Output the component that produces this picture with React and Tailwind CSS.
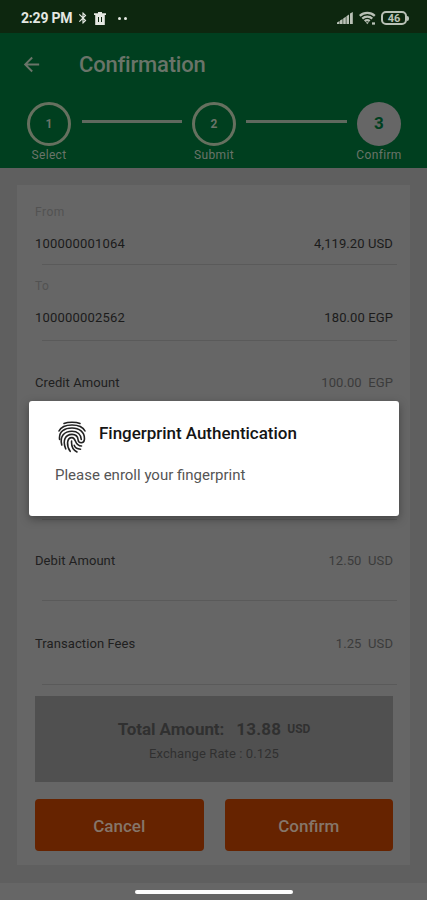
import { MdArrowBack, MdBluetooth } from "react-icons/md";

const steps = [
  { number: "1", label: "Select" },
  { number: "2", label: "Submit" },
  { number: "3", label: "Confirm", current: true },
];

const accounts = [
  { title: "From", account: "100000001064", balance: "4,119.20 USD" },
  { title: "To", account: "100000002562", balance: "180.00 EGP" },
];

function StatusBar() {
  return (
    <div className="flex h-[33px] items-center bg-[#0d270f] pt-[3px] pr-[18px] pl-[21px] text-[#e4e8e2]">
      <span className="w-[53px] whitespace-nowrap text-[14px] font-bold tracking-[-0.2px]">
        2:29 PM
      </span>
      <MdBluetooth className="ml-[2px] size-[14px]" />
      <svg className="ml-[4px] h-[13px] w-3" viewBox="0 0 12 13" fill="currentColor">
        <path d="M4 0h4v1.2h4V3H0V1.2h4z" />
        <path fillRule="evenodd" d="M1.2 3h9.6v10H1.2zM4 5v5h1V5zm3 0v5h1V5z" />
      </svg>
      <span className="ml-3 flex gap-[3px]">
        <span className="size-[3px] rounded-full bg-current" />
        <span className="size-[3px] rounded-full bg-current" />
      </span>

      <div className="ml-auto flex items-center text-[#b9c1b6]">
        <svg className="h-3 w-4" viewBox="0 0 16 12" fill="currentColor">
          <path d="M0 10.5 2.6 9v3H0zM3 8.6l2.6-1.6v5H3zM6.2 6.4l2.6-1.6V12H6.2zM9.4 4.2 12 2.4V12H9.4zM13 1.6 15.8 0v12H13z" />
        </svg>
        <svg className="ml-[6px] h-[14px] w-[17px]" viewBox="0 0 17 14" fill="none" stroke="currentColor" strokeWidth="2.3">
          <path d="M.8 4.8a11 11 0 0 1 15 0M3.3 7.6a7.4 7.4 0 0 1 10 0M5.7 10.2a3.8 3.8 0 0 1 5 0" />
          <path d="m8.3 13.2-1.6-2h3.2z" fill="currentColor" stroke="none" />
          <path d="M13 12.5h3" />
        </svg>
        <div className="ml-[5px] flex h-[14px] w-[26px] items-center justify-center rounded-[5px] border-2 border-current">
          <span className="text-[11px] leading-none font-bold">46</span>
        </div>
        <span className="h-[5px] w-[2px] rounded-r-sm bg-current" />
      </div>
    </div>
  );
}

function Header() {
  return (
    <header className="h-[135px] bg-[#003f1f] text-[#6a7469]">
      <div className="flex h-[62px] items-center pl-[20px]">
        <MdArrowBack className="size-[23px]" />
        <h1 className="ml-9 text-[22px] font-medium tracking-[-0.2px]">Confirmation</h1>
      </div>

      <div className="relative flex justify-between pt-[7px] pr-[26px] pl-[27px]">
        {steps.map(({ number, label, current }) => (
          <div key={number} className="flex w-11 flex-col items-center">
            <span
              className={`flex size-11 items-center justify-center rounded-full font-bold ${
                current
                  ? "bg-[#666666] text-[17px] text-[#003f1f]"
                  : "border-[3px] border-[#66705f] text-[12px]"
              }`}
            >
              {number}
            </span>
            <span className="mt-[2px] text-[12px] leading-[15px] tracking-[0.35px]">{label}</span>
          </div>
        ))}
        <span className="absolute top-[25px] left-[82px] h-[3px] w-[100px] bg-[#5f695e]" />
        <span className="absolute top-[25px] left-[246px] h-[3px] w-[101px] bg-[#5f695e]" />
      </div>
    </header>
  );
}

function AmountRow({ label, value, className }) {
  return (
    <div className={`flex items-center justify-between pt-[2px] ${className}`}>
      <span className="tracking-[0.08px] text-[#202020]">{label}</span>
      <span className="tracking-[0.08px] whitespace-pre text-[#3b3b3b]">{value}</span>
    </div>
  );
}

function Divider() {
  return <div className="-mr-1 ml-[7px] h-px bg-[#5a5a5a]" />;
}

function FingerprintIcon() {
  return (
    <svg
      className="ml-[3px] h-8 w-7 shrink-0"
      viewBox="0 0 28 32"
      fill="none"
      stroke="#222222"
      strokeWidth="1.6"
      strokeLinecap="round"
    >
      <path d="M6 2.5C10 .8 18 .8 22 2.5" />
      <path d="M1 10C5 2 23 2 27 10" />
      <path d="M1.6 18.5C.5 10 7 7 14 7s13 4 12.4 11.5c-.3 4.3-6 4.3-6.3.2C19.8 15.500 17.600 13.400 14 13.400c-6.500 0-9.800 6-6.300 14.400" />
      <path d="M3.800 24C1.300 15 6.500 10.200 14 10.200c5.500 0 9 3.300 9.300 8.300" />
      <path d="M12.200 30.300C8.500 25.500 8.300 16.600 14 16.600c4.600 0 2 8.400 9.500 8.400" />
      <path d="M19 31C14.300 28.800 13.200 25 13.600 20" />
      <path d="M22.500 28.300C18.700 28 16.900 26.400 16.200 24.300" />
    </svg>
  );
}

function FingerprintDialog() {
  return (
    <div
      role="dialog"
      aria-label="Fingerprint Authentication"
      className="absolute top-[401px] left-[29px] h-[115px] w-[370px] rounded-[3px] bg-white px-[26px] pt-[20px] shadow-[0_3px_10px_rgba(0,0,0,0.35)]"
    >
      <div className="flex h-[35px] items-start">
        <FingerprintIcon />
        <h2 className="ml-[13px] text-[17px] leading-6 font-medium tracking-[-0.03px] text-[#151515]">
          Fingerprint Authentication
        </h2>
      </div>
      <p className="mt-[9px] text-[15px] leading-5 text-[#555555]">Please enroll your fingerprint</p>
    </div>
  );
}

export default function App() {
  return (
    <div className="relative flex h-[900px] w-[427px] flex-col overflow-hidden bg-[#5f5f5f] font-['Roboto',sans-serif]">
      <StatusBar />
      <Header />

      <main className="mx-[17px] mt-[17px] flex h-[680px] flex-col bg-[#666666] pr-[17px] pl-[18px] text-[13px]">
        {accounts.map(({ title, account, balance }, index) => (
          <section key={title}>
            <div className={index === 0 ? "h-[79px] pt-[19px]" : "h-[75px] pt-[13px]"}>
              <p className="text-[12px] leading-4 tracking-[0.5px] text-[#525252]">{title}</p>
              <div className="mt-[15px] flex justify-between leading-[18px] text-[#1b1b1b]">
                <span className="tracking-[0.2px]">{account}</span>
                <span className="tracking-[0.1px]">{balance}</span>
              </div>
            </div>
            <Divider />
          </section>
        ))}

        <AmountRow label="Credit Amount" value="100.00  EGP" className="h-[82px]" />
        <Divider />
        <div className="h-[95px]" />
        <Divider />
        <AmountRow label="Debit Amount" value="12.50  USD" className="h-20" />
        <Divider />
        <AmountRow label="Transaction Fees" value="1.25  USD" className="h-[83px]" />
        <Divider />

        <div className="mt-[11px] flex h-[86px] flex-col items-center bg-[#505050] pt-[22px] text-[#303030]">
          <p className="flex items-center text-[17px] leading-[22px] font-bold">
            <span className="tracking-[-0.05px]">Total Amount:</span>
            <span className="ml-3 tracking-[0.2px]">13.88</span>
            <span className="ml-1.5 text-[12px]">USD</span>
          </p>
          <p className="mt-[6px] text-[13px] leading-4 tracking-[0.1px]">Exchange Rate : 0.125</p>
        </div>

        <div className="mt-[17px] flex gap-[21px] text-[17px] font-medium text-[#85766a]">
          <button type="button" className="h-[52px] flex-1 rounded-[4px] bg-[#662300] pt-[3px]">
            Cancel
          </button>
          <button type="button" className="h-[52px] flex-1 rounded-[4px] bg-[#662300] pt-[3px]">
            Confirm
          </button>
        </div>
      </main>

      <footer className="mt-[18px] flex flex-1 justify-center bg-[#666666] pt-[7px]">
        <span className="h-1 w-[158px] rounded-full bg-white" />
      </footer>

      <FingerprintDialog />
    </div>
  );
}
